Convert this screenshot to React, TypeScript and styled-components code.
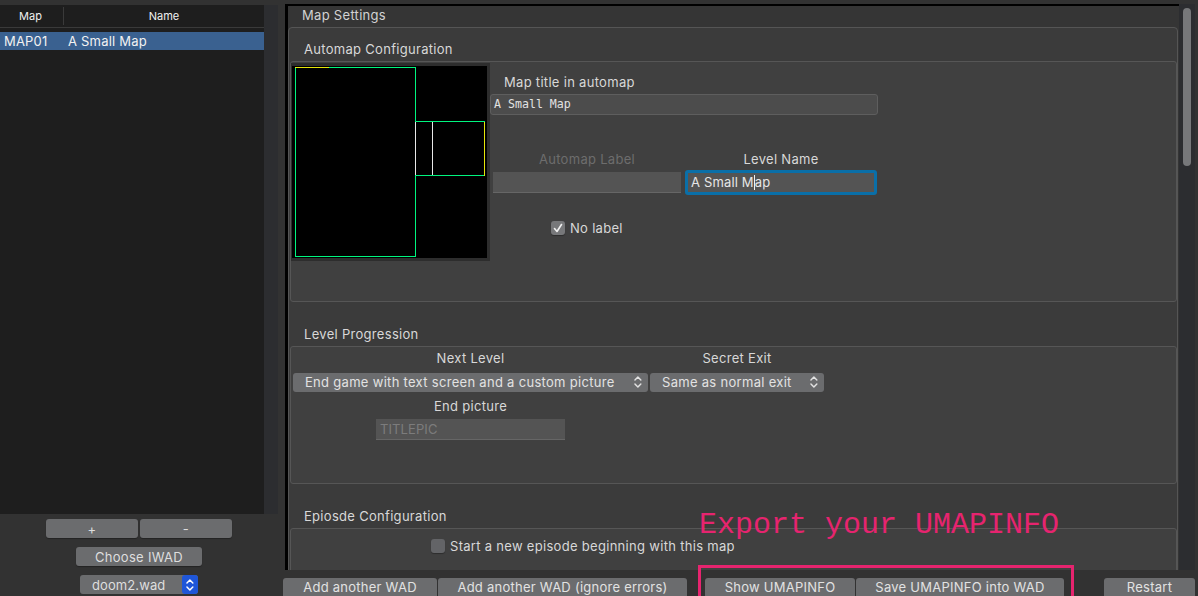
import styled, { createGlobalStyle } from "styled-components";

const GlobalStyle = createGlobalStyle`
  html, body {
    margin: 0;
    padding: 0;
    background: #323232;
  }
  * {
    box-sizing: border-box;
  }
`;

function Stepper({ size = 14 }: { size?: number }) {
  return (
    <svg width={size * 0.7} height={size} viewBox="0 0 10 14" fill="none" stroke="currentColor" strokeWidth="1.5" strokeLinecap="round" strokeLinejoin="round">
      <path d="M2 5l3-3 3 3" />
      <path d="M2 9l3 3 3-3" />
    </svg>
  );
}

function Check() {
  return (
    <svg width="10" height="10" viewBox="0 0 10 10" fill="none" stroke="#f0f0f0" strokeWidth="1.6" strokeLinecap="round" strokeLinejoin="round">
      <path d="M1.5 5.5l2.5 3 4.5-7" />
    </svg>
  );
}

function MapPreview() {
  return (
    <PreviewFrame>
      <svg width="195" height="192" viewBox="0 0 195 192" style={{ display: "block" }}>
        <rect width="195" height="192" fill="#000" />
        <g fill="none" strokeWidth="1" shapeRendering="crispEdges">
          <path stroke="#00f57f" d="M37 1.5H123.5V55.5H192.5M192.5 109.5H123.5V190.5H3.5V1.5" />
          <path stroke="#e6e60a" d="M3 1.5H37" />
          <path stroke="#e6e60a" d="M192.5 55.5V109.5" />
          <path stroke="#e8e8e8" d="M123.5 56V109M140.5 56V109" />
        </g>
      </svg>
    </PreviewFrame>
  );
}

export default function App() {
  return (
    <Page>
      <GlobalStyle />
      <Sidebar>
        <ListArea>
          <MapList>
            <ListHeader>
              <MapHead>Map</MapHead>
              <NameHead>Name</NameHead>
            </ListHeader>
            <ListRow>
              <MapCell>MAP01</MapCell>
              <span>A Small Map</span>
            </ListRow>
          </MapList>
          <ListScrollTrack />
        </ListArea>
        <PlusMinusRow>
          <SideButton $w={92}>+</SideButton>
          <SideButton $w={92}>-</SideButton>
        </PlusMinusRow>
        <IwadRow>
          <SideButton $w={126}>Choose IWAD</SideButton>
        </IwadRow>
        <WadSelectRow>
          <WadSelect>
            <span>doom2.wad</span>
            <BlueStepper>
              <Stepper size={14} />
            </BlueStepper>
          </WadSelect>
        </WadSelectRow>
      </Sidebar>

      <Content>
        <TopArea>
          <Panel>
            <PanelTitle>Map Settings</PanelTitle>
            <OuterGroup>
              <SectionTitle $h={33} $pad={13}>Automap Configuration</SectionTitle>
              <AutomapBox>
                <MapPreview />
                <AutomapFields>
                  <FieldLabelLeft>Map title in automap</FieldLabelLeft>
                  <MonoInput>A Small Map</MonoInput>
                  <NameRow>
                    <NameColumn>
                      <DimLabel>Automap Label</DimLabel>
                      <LabelInput />
                    </NameColumn>
                    <NameColumn>
                      <CenterLabel>Level Name</CenterLabel>
                      <FocusInput>
                        A Small M<Caret />ap
                      </FocusInput>
                    </NameColumn>
                  </NameRow>
                  <NoLabelRow>
                    <CheckBox $checked>
                      <Check />
                    </CheckBox>
                    No label
                  </NoLabelRow>
                </AutomapFields>
              </AutomapBox>

              <SectionTitle $h={44} $pad={24}>Level Progression</SectionTitle>
              <ProgressionBox>
                <SelectRow>
                  <SelectColumn $w={355}>
                    <CenterLabel>Next Level</CenterLabel>
                    <GreySelect>
                      <span>End game with text screen and a custom picture</span>
                      <Stepper size={14} />
                    </GreySelect>
                  </SelectColumn>
                  <SelectColumn $w={174}>
                    <CenterLabel>Secret Exit</CenterLabel>
                    <GreySelect>
                      <span>Same as normal exit</span>
                      <Stepper size={14} />
                    </GreySelect>
                  </SelectColumn>
                </SelectRow>
                <EndPictureColumn>
                  <CenterLabel>End picture</CenterLabel>
                  <EndPictureInput>TITLEPIC</EndPictureInput>
                </EndPictureColumn>
              </ProgressionBox>

              <SectionTitle $h={44} $pad={24}>Epiosde Configuration</SectionTitle>
              <EpisodeBox>
                <CheckBox />
                Start a new episode beginning with this map
              </EpisodeBox>
            </OuterGroup>
          </Panel>
          <ScrollTrack>
            <ScrollThumb />
          </ScrollTrack>
        </TopArea>

        <BottomBar>
          <BarButton $w={154}>Add another WAD</BarButton>
          <BarButton $w={249}>Add another WAD (ignore errors)</BarButton>
          <BarButton $w={150} $left={17}>Show UMAPINFO</BarButton>
          <BarButton $w={208}>Save UMAPINFO into WAD</BarButton>
          <BarButton $w={91} $left={39}>Restart</BarButton>
        </BottomBar>
      </Content>

      <ExportNote>Export your UMAPINFO</ExportNote>
      <ExportHighlight />
    </Page>
  );
}

const uiFont = `Inter, "Liberation Sans", sans-serif`;

const Page = styled.div`
  position: relative;
  display: flex;
  width: 1198px;
  height: 596px;
  overflow: hidden;
  background: #323232;
  color: #d8d8d8;
  font-family: ${uiFont};
  font-size: 13px;
  letter-spacing: 0.3px;
`;
const Sidebar = styled.aside`
  display: flex;
  flex-direction: column;
  flex: none;
  width: 283px;
  padding-top: 5px;
`;
const ListArea = styled.div`
  display: flex;
  width: 278px;
  height: 509px;
`;
const MapList = styled.div`
  width: 264px;
  background: #1e1e1e;
  color: #f0f0f0;
`;
const ListHeader = styled.div`
  display: flex;
  align-items: center;
  height: 23px;
  border-bottom: 1px solid #3a3a3a;
  font-size: 11px;
  letter-spacing: 0;
`;
const MapHead = styled.div`
  width: 64px;
  height: 18px;
  padding-right: 2px;
  line-height: 18px;
  text-align: center;
  border-right: 1px solid #3a3a3a;
`;
const NameHead = styled.div`
  flex: 1;
  text-align: center;
`;
const ListRow = styled.div`
  display: flex;
  align-items: center;
  height: 18px;
  margin-top: 4px;
  padding-left: 4px;
  background: #3a6190;
  color: #f2f2f2;
  letter-spacing: 0.2px;
`;
const MapCell = styled.span`
  width: 64px;
`;
const ListScrollTrack = styled.div`
  width: 14px;
  background: #2c2d30;
`;
const PlusMinusRow = styled.div`
  display: flex;
  gap: 2px;
  margin: 5px 0 0 46px;
`;
const SideButton = styled.button<{ $w: number }>`
  width: ${(p) => p.$w}px;
  height: 19px;
  padding: 0;
  border: none;
  border-radius: 3px;
  background: #6b6c6e;
  box-shadow: 0 1px 1px rgba(0, 0, 0, 0.3);
  color: #dedede;
  font-family: ${uiFont};
  font-size: 13px;
  letter-spacing: 0.3px;
`;
const IwadRow = styled.div`
  margin: 9px 0 0 76px;
`;
const WadSelectRow = styled.div`
  margin: 9px 0 0 80px;
`;
const WadSelect = styled.div`
  display: flex;
  align-items: center;
  justify-content: space-between;
  width: 118px;
  height: 19px;
  padding-left: 12px;
  border-radius: 3px;
  background: #6b6c6e;
  color: #dedede;
  letter-spacing: 0.1px;
`;
const BlueStepper = styled.span`
  display: flex;
  align-items: center;
  justify-content: center;
  width: 16px;
  height: 19px;
  border-radius: 3px;
  background: #1f56d8;
  color: #fff;
`;
const Content = styled.main`
  display: flex;
  flex-direction: column;
  flex: none;
  width: 915px;
`;
const TopArea = styled.div`
  display: flex;
  height: 570px;
  padding-top: 4px;
`;
const Panel = styled.section`
  width: 894px;
  margin-left: 2px;
  overflow: hidden;
  border-top: 2px solid #000;
  border-left: 3px solid #000;
  background: #353535;
`;
const PanelTitle = styled.div`
  height: 21px;
  padding-left: 14px;
  line-height: 19px;
  color: #d2d2d2;
`;
const OuterGroup = styled.div`
  width: 890px;
  height: 560px;
  padding: 0 1px;
  border: 1px solid #555;
  border-radius: 4px 4px 0 0;
  background: #3b3b3b;
`;
const SectionTitle = styled.div<{ $h: number; $pad: number }>`
  height: ${(p) => p.$h}px;
  padding: ${(p) => p.$pad}px 0 0 14px;
  line-height: 17px;
  color: #d8d8d8;
`;
const InnerBox = styled.div`
  width: 887px;
  border: 1px solid #565656;
  border-radius: 3px;
  background: #404040;
`;
const AutomapBox = styled(InnerBox)`
  display: flex;
  align-items: flex-start;
  height: 241px;
  padding-top: 1px;
`;
const PreviewFrame = styled.div`
  flex: none;
  width: 199px;
  height: 198px;
  padding: 3px 3px 3px 1px;
  background: #2d2d2d;
`;
const AutomapFields = styled.div`
  display: flex;
  flex-direction: column;
  padding-top: 11px;
`;
const FieldLabelLeft = styled.div`
  height: 20px;
  padding-left: 14px;
  line-height: 17px;
`;
const MonoInput = styled.div`
  width: 388px;
  height: 21px;
  padding-left: 3px;
  border: 1px solid #5e5e5e;
  border-radius: 3px;
  background: #4c4c4c;
  color: #e2e2e2;
  font-family: "DejaVu Sans Mono", "Liberation Mono", monospace;
  font-size: 11.6px;
  letter-spacing: 0;
  line-height: 19px;
`;
const NameRow = styled.div`
  display: flex;
  gap: 4px;
  margin: 36px 0 0 3px;
`;
const NameColumn = styled.div`
  display: flex;
  flex-direction: column;
  align-items: center;
`;
const CenterLabel = styled.div`
  height: 18px;
  line-height: 17px;
`;
const DimLabel = styled(CenterLabel)`
  height: 21px;
  color: #6d6d6d;
`;
const LabelInput = styled.div`
  width: 188px;
  height: 21px;
  background: #545454;
  border-bottom: 1px solid #666;
`;
const FocusInput = styled.div`
  width: 192px;
  height: 25px;
  margin-top: 1px;
  padding-left: 3px;
  border: 3px solid #0a6fa8;
  border-radius: 3px;
  background: #545454;
  color: #e6e6e6;
  line-height: 19px;
  letter-spacing: 0.15px;
`;
const Caret = styled.span`
  display: inline-block;
  width: 1px;
  height: 15px;
  vertical-align: -3px;
  background: #f0f0f0;
`;
const NoLabelRow = styled.div`
  display: flex;
  align-items: center;
  gap: 5px;
  margin: 25px 0 0 61px;
`;
const CheckBox = styled.span<{ $checked?: boolean }>`
  display: inline-flex;
  align-items: center;
  justify-content: center;
  width: 14px;
  height: 14px;
  border-radius: 3px;
  background: ${(p) => (p.$checked ? "#77787a" : "#636467")};
  box-shadow: 0 1px 1px rgba(0, 0, 0, 0.3);
`;
const ProgressionBox = styled(InnerBox)`
  height: 138px;
  padding: 3px 0 0 2px;
`;
const SelectRow = styled.div`
  display: flex;
  gap: 2px;
`;
const SelectColumn = styled.div<{ $w: number }>`
  display: flex;
  flex-direction: column;
  align-items: center;
  width: ${(p) => p.$w}px;
`;
const GreySelect = styled.div`
  display: flex;
  align-items: center;
  justify-content: space-between;
  width: 100%;
  height: 19px;
  margin-top: 5px;
  padding: 0 5px 2px 12px;
  border-radius: 3px;
  background: #6b6c6e;
  color: #e2e2e2;
  white-space: nowrap;
`;
const EndPictureColumn = styled.div`
  display: flex;
  flex-direction: column;
  align-items: center;
  width: 355px;
  margin-top: 6px;
`;
const EndPictureInput = styled.div`
  width: 189px;
  height: 21px;
  margin-top: 3px;
  padding-left: 4px;
  border-bottom: 1px solid #666;
  background: #545454;
  color: #7c7c7c;
  line-height: 20px;
  letter-spacing: 0.1px;
`;
const EpisodeBox = styled(InnerBox)`
  display: flex;
  align-items: flex-start;
  gap: 5px;
  height: 60px;
  padding: 10px 0 0 140px;
  line-height: 14px;
`;
const ScrollTrack = styled.div`
  width: 16px;
  padding: 4px 4px;
  background: #2c2d30;
`;
const ScrollThumb = styled.div`
  width: 8px;
  height: 158px;
  border-radius: 4px;
  background: #77787a;
`;
const BottomBar = styled.div`
  display: flex;
  gap: 1px;
  height: 26px;
  padding-top: 8px;
`;
const BarButton = styled.button<{ $w: number; $left?: number }>`
  flex: none;
  width: ${(p) => p.$w}px;
  height: 20px;
  margin-left: ${(p) => p.$left ?? 0}px;
  padding: 0 0 2px;
  border: none;
  border-radius: 3px;
  background: #6b6c6e;
  color: #e2e2e2;
  font-family: ${uiFont};
  font-size: 13px;
  letter-spacing: 0.25px;
`;
const ExportNote = styled.div`
  position: absolute;
  top: 507px;
  left: 699px;
  color: #e6246f;
  font-family: "Liberation Mono", monospace;
  font-size: 30px;
  letter-spacing: 0;
  line-height: 36px;
  white-space: nowrap;
`;
const ExportHighlight = styled.div`
  position: absolute;
  top: 565px;
  left: 698px;
  width: 376px;
  height: 40px;
  border: 3px solid #e6246f;
`;
